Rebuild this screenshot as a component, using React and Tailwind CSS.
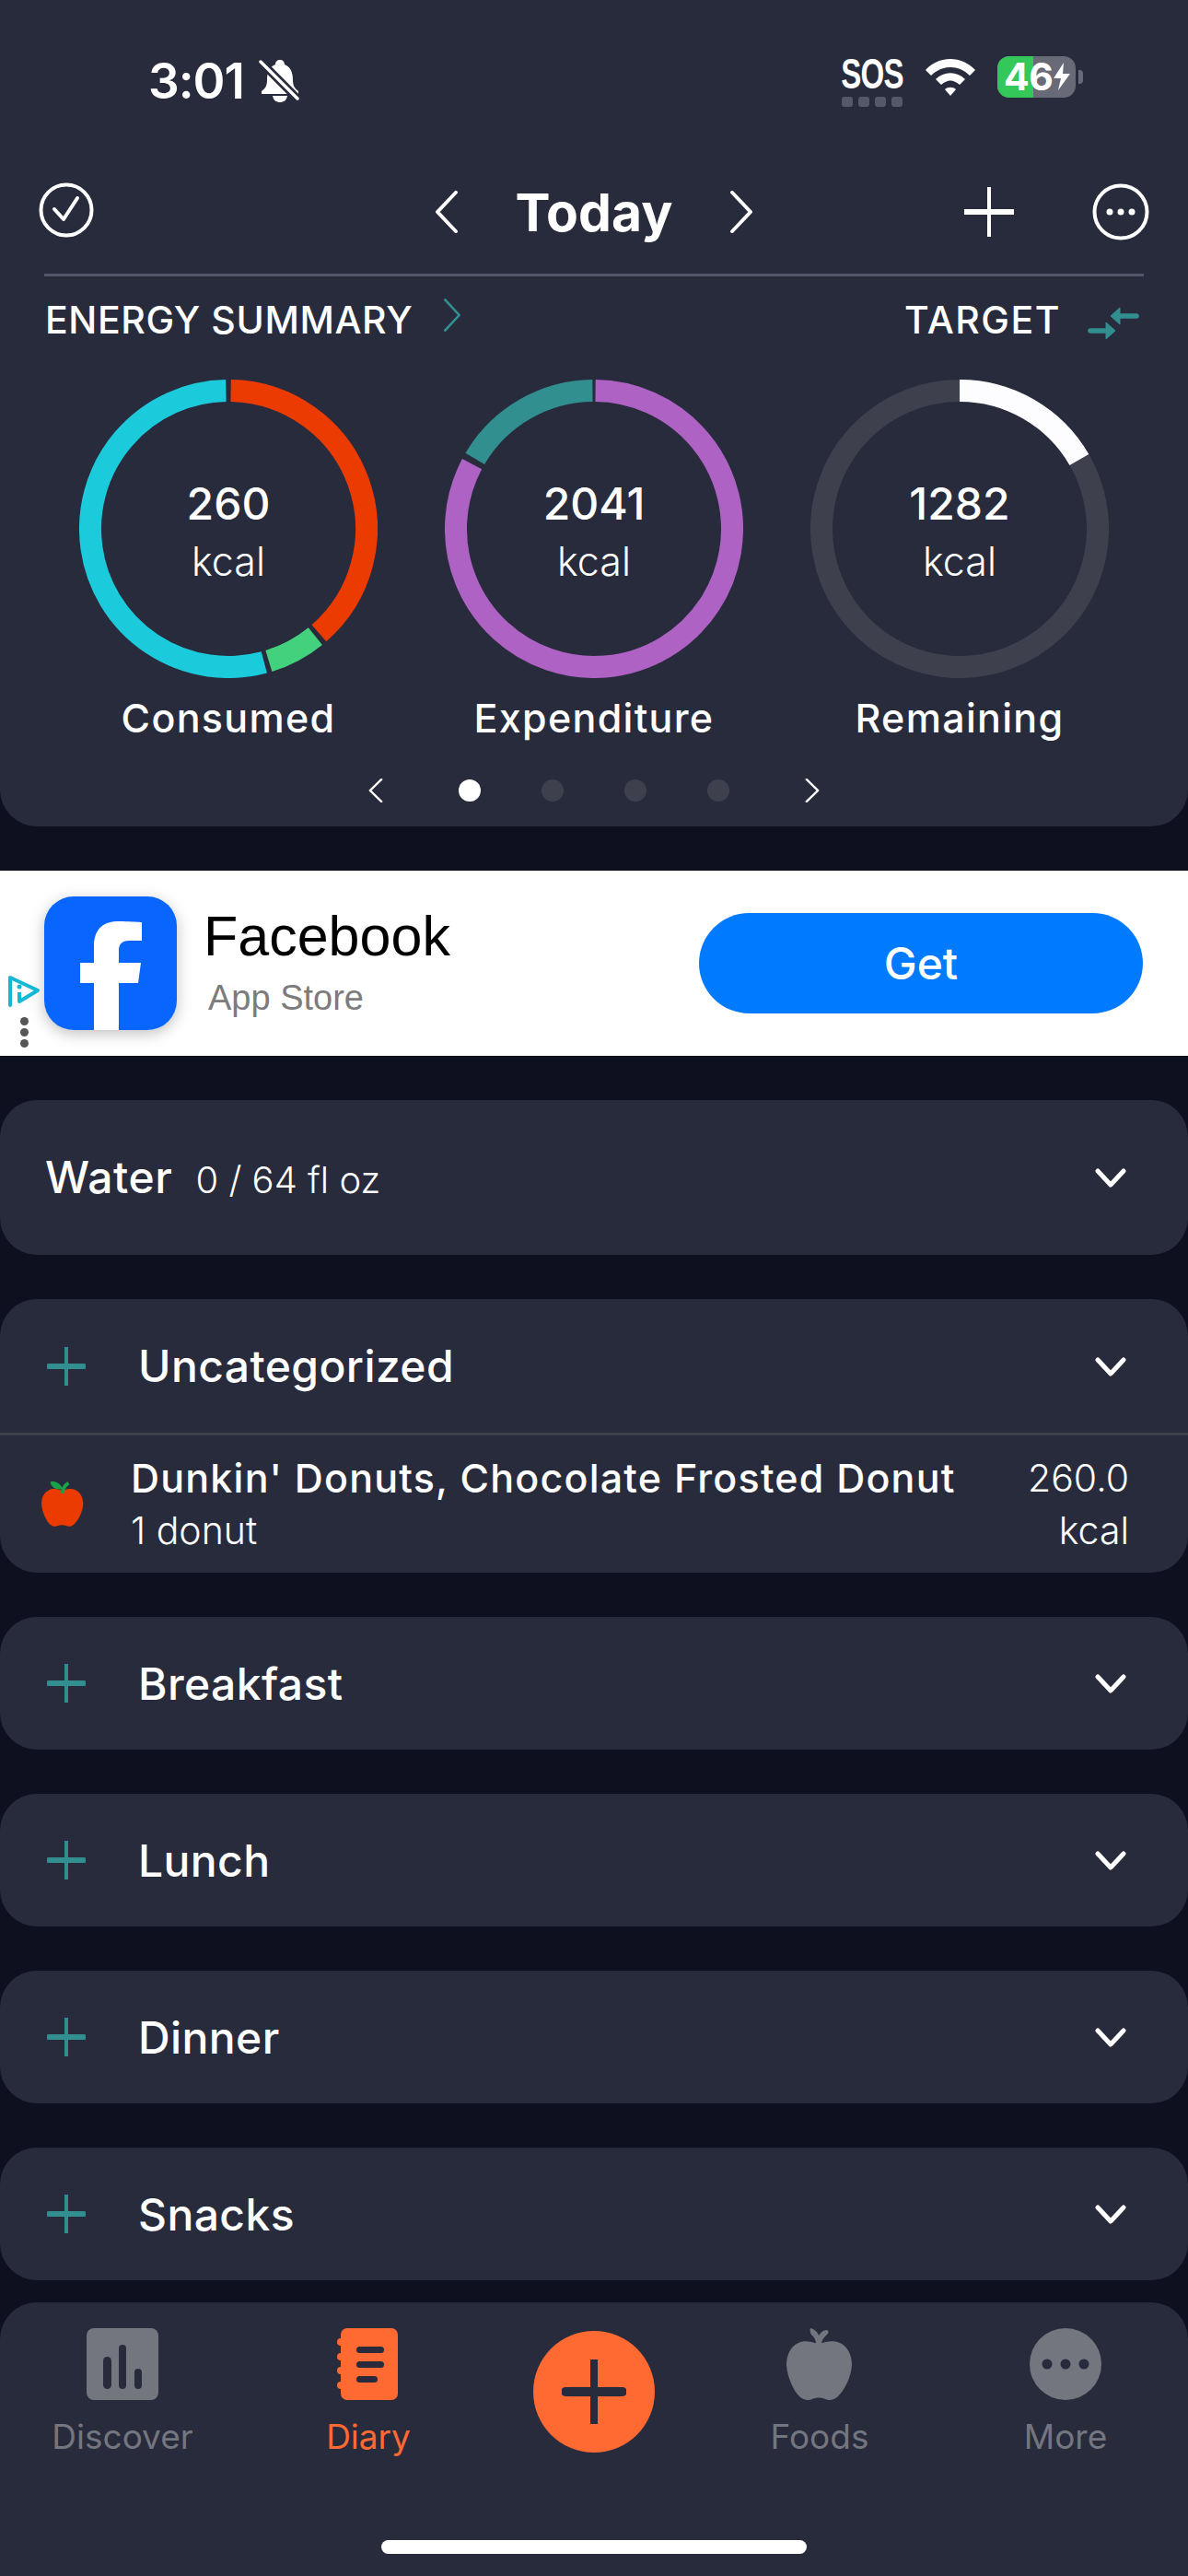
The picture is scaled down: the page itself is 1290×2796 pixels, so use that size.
import React from "react";

const polar = (r, deg) => {
  const a = ((deg - 90) * Math.PI) / 180;
  return [162 + r * Math.cos(a), 162 + r * Math.sin(a)];
};

const arc = (from, to) => {
  const [x1, y1] = polar(150, from);
  const [x2, y2] = polar(150, to);
  return `M ${x1} ${y1} A 150 150 0 ${to - from > 180 ? 1 : 0} 1 ${x2} ${y2}`;
};

const rings = [
  {
    value: "260",
    label: "Consumed",
    segments: [
      [1, 139, "#ec3b00"],
      [141, 163, "#43d17d"],
      [165, 359, "#1bcbdc"],
    ],
  },
  {
    value: "2041",
    label: "Expenditure",
    segments: [
      [0.6, 298, "#ad62c4"],
      [300.5, 359.4, "#328f90"],
    ],
  },
  {
    value: "1282",
    label: "Remaining",
    segments: [
      [60, 360, "#3f404e"],
      [0.01, 60, "#fdfdff"],
    ],
  },
];

const appleBody =
  "M35 17 C26 14 18 13 13 16 C4 20 0 30 0 40 C1 54 8 68 14 74 C18 78 24 79 28 77 C32 75 38 75 42 77 C46 79 52 78 56 74 C63 67 70 54 71 40 C71 30 67 20 58 16 C52 13 44 14 35 17 Z";

const Ring = ({ value, label, segments }) => (
  <div className="flex w-[324px] flex-col items-center">
    <div className="relative h-[324px] w-[324px]">
      <svg width="324" height="324" viewBox="0 0 324 324" fill="none">
        {segments.map(([from, to, color]) => (
          <path key={from} d={arc(from, to)} stroke={color} strokeWidth="24" />
        ))}
      </svg>
      <div className="absolute inset-0 flex flex-col items-center justify-center pt-[8px] text-white">
        <div className="h-[62px] text-[48px] leading-[62px] font-medium">{value}</div>
        <div className="h-[62px] text-[43px] leading-[62px] font-light">kcal</div>
      </div>
    </div>
    <div className="mt-[16px] text-center text-[43px] leading-[54px] font-medium tracking-[1.3px] whitespace-nowrap text-white">
      {label}
    </div>
  </div>
);

const Chevron = ({ dir = "right", w = 26, h = 50, color = "#fff", sw = 4 }) => (
  <svg width={w} height={h} viewBox="0 0 26 50" fill="none" preserveAspectRatio="none">
    <path
      d={dir === "right" ? "M3 2 L23 25 L3 48" : "M23 2 L3 25 L23 48"}
      stroke={color}
      strokeWidth={sw}
      strokeLinecap="round"
      strokeLinejoin="round"
    />
  </svg>
);

const ChevronDown = () => (
  <svg className="mt-[2px]" width="34" height="22" viewBox="0 0 34 22" fill="none">
    <path d="M3 3 L17 18 L31 3" stroke="#fff" strokeWidth="5" strokeLinecap="round" strokeLinejoin="round" />
  </svg>
);

const TealPlus = () => (
  <svg width="42" height="42" viewBox="0 0 42 42" fill="none">
    <path d="M21 1 V41" stroke="#328f90" strokeWidth="4" strokeLinecap="round" />
    <path d="M2 21 H40" stroke="#328f90" strokeWidth="6" strokeLinecap="round" />
  </svg>
);

const StatusBar = () => (
  <div className="flex h-[176px] items-center justify-between pr-[114px] pl-[161px] text-white">
    <div className="flex items-center">
      <span className="text-[53px] leading-none font-semibold tracking-[-1px]">3:01</span>
      <svg className="ml-[16px]" width="44" height="48" viewBox="0 0 44 48" fill="none">
        <path
          d="M23 1 C26 1 28 3 28 6 C35 9 37 15 37 23 C37 29 39 32 43 35 V38 H3 V35 C7 32 9 29 9 23 C9 15 11 9 18 6 C18 3 20 1 23 1 Z"
          fill="#fff"
        />
        <path d="M15 40 H31 C30 45 27 47 23 47 C19 47 16 45 15 40 Z" fill="#fff" />
        <path d="M2 3 L42 43" stroke="#282b3c" strokeWidth="9" />
        <path d="M2 3 L42 43" stroke="#fff" strokeWidth="3.5" strokeLinecap="round" />
      </svg>
    </div>
    <div className="flex items-center">
      <div className="flex w-[74px] flex-col items-center">
        <span className="text-[46px] leading-[38px] font-bold tracking-[-1px] whitespace-nowrap [font-family:'Liberation_Sans',sans-serif] [transform:scaleX(0.72)]">
          SOS
        </span>
        <div className="mt-[6px] flex gap-[6px]">
          <span className="h-[11px] w-[12px] rounded-[3px] bg-[#555869]" />
          <span className="h-[11px] w-[12px] rounded-[3px] bg-[#555869]" />
          <span className="h-[11px] w-[12px] rounded-[3px] bg-[#555869]" />
          <span className="h-[11px] w-[12px] rounded-[3px] bg-[#555869]" />
        </div>
      </div>
      <svg className="mb-[10px] ml-[19px]" width="58" height="42" viewBox="0 0 58 42" fill="none">
        <path d="M2 14 C17 -2 41 -2 56 14 L50 20 C38 8 20 8 8 20 Z" fill="#fff" />
        <path d="M13 24 C22 15 36 15 45 24 L39 30 C32 24 26 24 19 30 Z" fill="#fff" />
        <path d="M23 35 C26 32 32 32 35 35 L29 42 Z" fill="#fff" />
      </svg>
      <div className="mb-[10px] ml-[22px] flex items-center">
        <div className="relative flex h-[45px] w-[85px] items-center rounded-[13px] bg-[#686a77] pl-[7px]">
          <div className="absolute inset-y-0 left-0 w-[39px] rounded-l-[13px] bg-[#34c759]" />
          <span className="relative text-[41px] leading-[45px] font-bold tracking-[-0.5px]">46</span>
          <svg className="relative" width="20" height="30" viewBox="0 0 20 30">
            <path d="M12 0 L1 17 H9 L6 30 L19 12 H11 Z" fill="#fff" />
          </svg>
        </div>
        <div className="ml-[3px] h-[15px] w-[5px] rounded-r-[4px] bg-[#686a77]" />
      </div>
    </div>
  </div>
);

const NavRow = () => (
  <div className="flex h-[108px] items-center px-[42px] text-white">
    <div className="w-[240px]">
      <svg className="mb-[4px]" width="60" height="60" viewBox="0 0 60 60" fill="none">
        <circle cx="30" cy="30" r="27.5" stroke="#fff" strokeWidth="4" />
        <path d="M17 29 L27 40 L42 17" stroke="#fff" strokeWidth="4" strokeLinecap="round" strokeLinejoin="round" />
      </svg>
    </div>
    <div className="flex flex-1 items-center justify-center">
      <Chevron dir="left" h={46} />
      <span className="mx-[62px] text-[57px] leading-none font-bold">Today</span>
      <Chevron dir="right" h={46} />
    </div>
    <div className="flex w-[240px] items-center justify-end gap-[85px]">
      <svg width="54" height="54" viewBox="0 0 54 54" fill="none">
        <path d="M27 1 V53" stroke="#fff" strokeWidth="4" strokeLinecap="round" />
        <path d="M1 27 H53" stroke="#fff" strokeWidth="6" strokeLinecap="round" />
      </svg>
      <svg width="62" height="62" viewBox="0 0 62 62" fill="none">
        <circle cx="31" cy="31" r="28.5" stroke="#fff" strokeWidth="4" />
        <circle cx="19" cy="31" r="3.5" fill="#fff" />
        <circle cx="31" cy="31" r="3.5" fill="#fff" />
        <circle cx="43" cy="31" r="3.5" fill="#fff" />
      </svg>
    </div>
  </div>
);

const Header = () => (
  <div className="h-[897px] rounded-b-[40px] bg-[#282b3c]">
    <StatusBar />
    <NavRow />
    <div className="mx-[48px] mt-[13px] h-[3px] bg-[#53566a]" />
    <div className="flex h-[94px] items-center justify-between pr-[53px] pl-[49px] text-white">
      <div className="flex items-center">
        <span className="text-[41px] leading-none font-medium tracking-[0.6px]">ENERGY SUMMARY</span>
        <span className="mb-[10px] ml-[33px]">
          <Chevron w={20} h={36} color="#328f90" sw={3.5} />
        </span>
      </div>
      <div className="flex items-center">
        <span className="text-[41px] leading-none font-medium tracking-[1.5px]">TARGET</span>
        <svg className="mt-[8px] ml-[29px]" width="56" height="36" viewBox="0 0 56 36" fill="none">
          <path d="M35 10 H53" stroke="#328f90" strokeWidth="5.5" strokeLinecap="round" />
          <path d="M25 10 L35 1 V19 Z" fill="#328f90" stroke="#328f90" strokeWidth="1" strokeLinejoin="round" />
          <path d="M3 26 H20" stroke="#328f90" strokeWidth="5.5" strokeLinecap="round" />
          <path d="M30 26 L20 17 V35 Z" fill="#328f90" stroke="#328f90" strokeWidth="1" strokeLinejoin="round" />
        </svg>
      </div>
    </div>
    <div className="mt-[18px] flex justify-center gap-[73px]">
      {rings.map((r) => (
        <Ring key={r.label} {...r} />
      ))}
    </div>
    <div className="mt-[39px] flex items-center justify-center">
      <Chevron dir="left" w={16} h={26} sw={4} />
      <span className="ml-[82px] h-[24px] w-[24px] rounded-full bg-white" />
      <span className="ml-[66px] h-[24px] w-[24px] rounded-full bg-[#3f404e]" />
      <span className="ml-[66px] h-[24px] w-[24px] rounded-full bg-[#3f404e]" />
      <span className="ml-[66px] h-[24px] w-[24px] rounded-full bg-[#3f404e]" />
      <span className="mr-[82px] w-0" />
      <Chevron dir="right" w={16} h={26} sw={4} />
    </div>
  </div>
);

const AdBanner = () => (
  <div className="relative mt-[48px] flex h-[201px] items-center bg-white pr-[49px] pl-[48px]">
    <div className="relative h-[145px] w-[144px] overflow-hidden rounded-[32px] bg-[#0866ff] shadow-[0_4px_16px_rgba(0,0,0,0.25)]">
      <svg className="absolute inset-0" width="144" height="145" viewBox="0 0 144 145">
        <path
          d="M54 145 V94 H39 V72 H54 V53 C54 36 64 27 80 27 C90 27 106 28 106 28 V48 H92 C84 48 81 52 81 59 V72 H105 L102 94 H81 V145 Z"
          fill="#fff"
        />
      </svg>
    </div>
    <div className="mb-[6px] ml-[29px] flex-1 [font-family:'Liberation_Sans',sans-serif]">
      <div className="text-[61px] leading-[72px] text-black">Facebook</div>
      <div className="mt-[9px] ml-[5px] text-[38px] leading-[44px] text-[#7c7c7c]">App Store</div>
    </div>
    <div className="flex h-[109px] w-[482px] items-center justify-center rounded-full bg-[#007aff] pt-[1px] text-[48px] font-medium text-white">
      Get
    </div>
    <div className="absolute top-[113px] left-[8px] flex w-[36px] flex-col items-center">
      <svg width="36" height="38" viewBox="0 0 36 38" fill="none">
        <path d="M3 33 V3 L33 17 L13 29" stroke="#14b8d4" strokeWidth="4" strokeLinejoin="round" strokeLinecap="round" />
        <path d="M13 19 V28" stroke="#14b8d4" strokeWidth="4" />
        <circle cx="13" cy="13" r="2.5" fill="#14b8d4" />
      </svg>
      <span className="mt-[8px] h-[9px] w-[9px] rounded-full bg-[#555]" />
      <span className="mt-[3px] h-[9px] w-[9px] rounded-full bg-[#555]" />
      <span className="mt-[3px] h-[9px] w-[9px] rounded-full bg-[#555]" />
    </div>
  </div>
);

const Meal = ({ name }) => (
  <div className="flex h-[144px] items-center rounded-[40px] bg-[#282b3c] pr-[67px] pl-[51px]">
    <TealPlus />
    <span className="mt-[2px] ml-[57px] flex-1 text-[48px] font-medium tracking-[0.4px] text-white">{name}</span>
    <ChevronDown />
  </div>
);

const FoodApple = () => (
  <svg width="46" height="51" viewBox="0 0 72 80">
    <path d={appleBody} fill="#ec3b00" />
    <path d="M15 2 C22 0 32 4 36 14 C26 17 16 12 15 2 Z" fill="#16a34a" />
    <path d="M36 22 C36 14 40 8 46 4" stroke="#16a34a" strokeWidth="6" fill="none" />
  </svg>
);

const Diary = () => (
  <div className="flex flex-col gap-[48px]">
    <div className="flex h-[168px] items-center rounded-[40px] bg-[#282b3c] pr-[67px] pl-[49px] text-white">
      <span className="text-[48px] font-medium tracking-[0.6px]">Water</span>
      <span className="mt-[6px] ml-[25px] flex-1 text-[40px] font-light">0 / 64 fl oz</span>
      <ChevronDown />
    </div>
    <div className="h-[297px] rounded-[40px] bg-[#282b3c] text-white">
      <div className="flex h-[145px] items-center pr-[67px] pl-[51px]">
        <TealPlus />
        <span className="ml-[57px] flex-1 text-[48px] font-medium tracking-[0.4px]">Uncategorized</span>
        <ChevronDown />
      </div>
      <div className="h-[3px] bg-[#3f404e]" />
      <div className="flex h-[149px] items-center pr-[64px] pl-[45px]">
        <FoodApple />
        <div className="ml-[51px] flex-1">
          <div className="text-[43px] leading-[57px] font-medium tracking-[1.2px] whitespace-nowrap">
            Dunkin' Donuts, Chocolate Frosted Donut
          </div>
          <div className="text-[41px] leading-[57px] font-light">1 donut</div>
        </div>
        <div className="text-right text-[41px] leading-[57px] font-light">
          <div>260.0</div>
          <div>kcal</div>
        </div>
      </div>
    </div>
    <Meal name="Breakfast" />
    <Meal name="Lunch" />
    <Meal name="Dinner" />
    <Meal name="Snacks" />
  </div>
);

const TabLabel = ({ children, active }) => (
  <span className={`mt-[18px] text-[37px] leading-[44px] ${active ? "text-[#ff6a33]" : "text-[#74767f]"}`}>
    {children}
  </span>
);

const TabBar = () => (
  <div className="relative mt-[24px] h-[297px] rounded-t-[40px] bg-[#282b3c]">
    <div className="flex items-start pt-[28px]">
      <div className="flex w-[266px] flex-col items-center">
        <svg width="78" height="78" viewBox="0 0 78 78">
          <rect width="78" height="78" rx="8" fill="#74767f" />
          <rect x="18" y="31" width="9" height="35" rx="4.5" fill="#282b3c" />
          <rect x="35" y="18" width="8" height="48" rx="4" fill="#282b3c" />
          <rect x="52" y="44" width="8" height="22" rx="4" fill="#282b3c" />
        </svg>
        <TabLabel>Discover</TabLabel>
      </div>
      <div className="flex w-[268px] flex-col items-center">
        <svg width="68" height="78" viewBox="0 0 68 78">
          <rect x="4" y="0" width="62" height="78" rx="7" fill="#ff6a33" />
          <circle cx="4" cy="15" r="4" fill="#ff6a33" />
          <circle cx="4" cy="31" r="4" fill="#ff6a33" />
          <circle cx="4" cy="46" r="4" fill="#ff6a33" />
          <circle cx="4" cy="62" r="4" fill="#ff6a33" />
          <rect x="21" y="20" width="30" height="7" rx="3.5" fill="#282b3c" />
          <rect x="21" y="36" width="30" height="7" rx="3.5" fill="#282b3c" />
          <rect x="21" y="52" width="23" height="7" rx="3.5" fill="#282b3c" />
        </svg>
        <TabLabel active>Diary</TabLabel>
      </div>
      <div className="w-[222px]" />
      <div className="flex w-[268px] flex-col items-center">
        <svg width="72" height="78" viewBox="0 0 72 78">
          <path d={appleBody} fill="#74767f" />
          <path
            d="M26 0 C30 1 34 4 35 8 C37 5 40 2 44 2 C46 3 46 5 44 7 C41 10 38 13 38 17 H32 C32 13 30 10 28 8 C26 6 25 3 26 0 Z"
            fill="#74767f"
          />
        </svg>
        <TabLabel>Foods</TabLabel>
      </div>
      <div className="flex w-[266px] flex-col items-center">
        <svg width="78" height="78" viewBox="0 0 78 78">
          <circle cx="39" cy="39" r="39" fill="#74767f" />
          <circle cx="19" cy="39" r="5.5" fill="#282b3c" />
          <circle cx="39" cy="39" r="5.5" fill="#282b3c" />
          <circle cx="59" cy="39" r="5.5" fill="#282b3c" />
        </svg>
        <TabLabel>More</TabLabel>
      </div>
    </div>
    <div className="absolute top-[31px] left-[579px] flex h-[132px] w-[132px] items-center justify-center rounded-full bg-[#ff6a33]">
      <svg width="70" height="70" viewBox="0 0 70 70" fill="none">
        <path d="M35 1 V69" stroke="#282b3c" strokeWidth="8" strokeLinecap="round" />
        <path d="M4 35 H66" stroke="#282b3c" strokeWidth="10" strokeLinecap="round" />
      </svg>
    </div>
    <div className="absolute bottom-[24px] left-[414px] h-[15px] w-[462px] rounded-full bg-white" />
  </div>
);

export default function App() {
  return (
    <div className="h-[2796px] w-[1290px] overflow-hidden bg-[#0e1020] [font-family:Inter,sans-serif]">
      <Header />
      <AdBanner />
      <div className="mt-[48px]">
        <Diary />
      </div>
      <TabBar />
    </div>
  );
}
